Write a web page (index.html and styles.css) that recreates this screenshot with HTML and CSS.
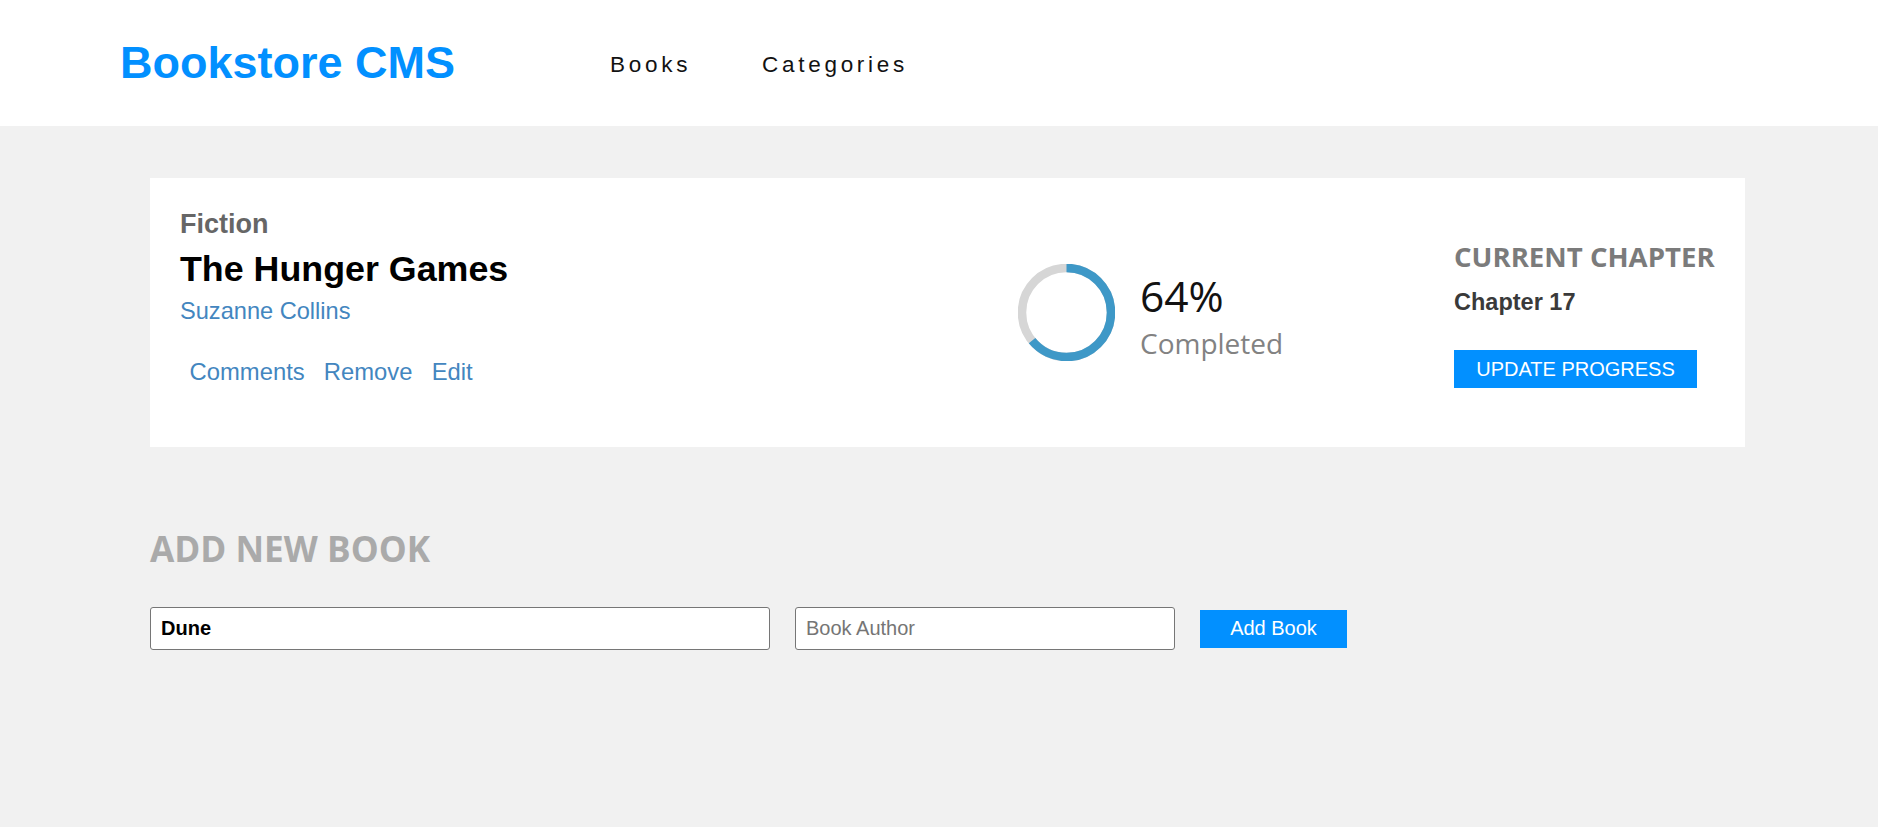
FILE: index.html
```html
<!DOCTYPE html>
<html lang="en">
<head>
<meta charset="utf-8">
<title>Bookstore CMS</title>
<link rel="stylesheet" href="styles.css">
</head>
<body>
<header class="header">
  <h1 class="logo">Bookstore CMS</h1>
  <nav class="nav">
    <a href="#">Books</a>
    <a href="#">Categories</a>
  </nav>
</header>
<main class="main">
  <section class="card">
    <div class="info">
      <p class="category">Fiction</p>
      <h2 class="title">The Hunger Games</h2>
      <p class="author">Suzanne Collins</p>
      <div class="actions">
        <button type="button">Comments</button>
        <button type="button">Remove</button>
        <button type="button">Edit</button>
      </div>
    </div>
    <div class="progress">
      <svg class="ring" width="97" height="97" viewBox="0 0 97 97">
        <circle cx="48.5" cy="48.5" r="44.5" fill="none" stroke="#d6d6d6" stroke-width="8.5"/>
        <circle cx="48.5" cy="48.5" r="44.5" fill="none" stroke="#3e98c7" stroke-width="8.5" stroke-dasharray="178.9 279.6" transform="rotate(-90 48.5 48.5)"/>
      </svg>
      <div class="progress-text">
        <p class="percent">64%</p>
        <p class="completed">Completed</p>
      </div>
    </div>
    <div class="chapter">
      <p class="chapter-label">CURRENT CHAPTER</p>
      <p class="chapter-name">Chapter 17</p>
      <button type="button" class="update">UPDATE PROGRESS</button>
    </div>
  </section>
  <h3 class="add-title">ADD NEW BOOK</h3>
  <form class="add-form">
    <input class="input-title" type="text" value="Dune" placeholder="Book title">
    <input class="input-author" type="text" placeholder="Book Author">
    <button type="button" class="add-btn">Add Book</button>
  </form>
</main>
</body>
</html>
```
FILE: styles.css
```css
body {
  margin: 0;
  background: #f1f1f1;
  font-family: "Liberation Sans", Arial, sans-serif;
}

.header {
  height: 126px;
  background: #fff;
  display: flex;
  align-items: center;
  padding-left: 120px;
}

.logo {
  margin: 0;
  font-size: 45px;
  line-height: 52px;
  font-weight: 700;
  color: #0290ff;
}

.nav {
  display: flex;
  gap: 71px;
  margin-left: 155px;
  margin-top: 3px;
}

.nav a {
  font-size: 22.5px;
  letter-spacing: 3.7px;
  color: #121212;
  text-decoration: none;
}

.main {
  padding: 52px 133px 0 150px;
}

.card {
  background: #fff;
  display: flex;
  align-items: center;
  height: 269px;
  box-sizing: border-box;
  padding: 0 30px;
}

.info {
  align-self: flex-start;
  flex: 1;
  padding-top: 31px;
}

.category {
  margin: 0;
  font-size: 27px;
  line-height: 31px;
  font-weight: 700;
  color: #666;
}

.title {
  margin: 9px 0 0;
  font-size: 35.8px;
  line-height: 41px;
  font-weight: 700;
  color: #000;
}

.author {
  margin: 8px 0 0;
  font-size: 23.6px;
  line-height: 27px;
  color: #4386bf;
}

.actions {
  display: flex;
  margin-top: 33px;
}

.actions button {
  font-family: "Liberation Sans", Arial, sans-serif;
  font-size: 23.8px;
  line-height: 27px;
  color: #4386bf;
  background: none;
  border: 0;
  padding: 0 9.6px;
  cursor: pointer;
}

.progress {
  width: 436px;
  display: flex;
  align-items: center;
  gap: 25px;
}

.ring {
  display: block;
  flex: none;
}

.progress-text {
  padding-top: 8px;
}

.percent {
  margin: 0;
  font-family: "Open Sans", sans-serif;
  font-size: 42.5px;
  line-height: 50px;
  color: #121212;
}

.completed {
  margin: 3px 0 0;
  font-family: "Open Sans", sans-serif;
  font-size: 28px;
  line-height: 38px;
  color: #828282;
}

.chapter {
  width: 261px;
  margin-top: 3px;
}

.chapter-label {
  margin: 0;
  font-family: "Open Sans", sans-serif;
  font-weight: 700;
  font-size: 27.6px;
  line-height: 32px;
  color: #7b7b7b;
  white-space: nowrap;
}

.chapter-name {
  margin: 17px 0 0;
  font-size: 23.5px;
  line-height: 27px;
  font-weight: 700;
  color: #3a3a3a;
}

.update {
  display: block;
  margin-top: 34px;
  width: 243px;
  height: 38px;
  padding: 0;
  border: 0;
  background: #0290ff;
  color: #fff;
  font-family: "Liberation Sans", Arial, sans-serif;
  font-size: 20px;
}

.add-title {
  margin: 78px 0 0;
  font-family: "Open Sans", sans-serif;
  font-weight: 700;
  font-size: 35.2px;
  line-height: 46px;
  color: #aaa;
}

.add-form {
  display: flex;
  align-items: center;
  margin-top: 36px;
}

.input-title,
.input-author {
  height: 43px;
  box-sizing: border-box;
  border: 1px solid #767676;
  border-radius: 3px;
  padding: 0 10px;
  background: #fff;
  font-family: "Liberation Sans", Arial, sans-serif;
  font-size: 20px;
  color: #000;
}

.input-title {
  width: 620px;
  font-weight: 700;
}

.input-author {
  width: 380px;
  margin-left: 25px;
}

.input-author::placeholder,
.input-title::placeholder {
  color: #757575;
  font-weight: 400;
}

.add-btn {
  margin-left: 25px;
  width: 147px;
  height: 38px;
  padding: 0;
  border: 0;
  background: #0290ff;
  color: #fff;
  font-family: "Liberation Sans", Arial, sans-serif;
  font-size: 20px;
}
```
